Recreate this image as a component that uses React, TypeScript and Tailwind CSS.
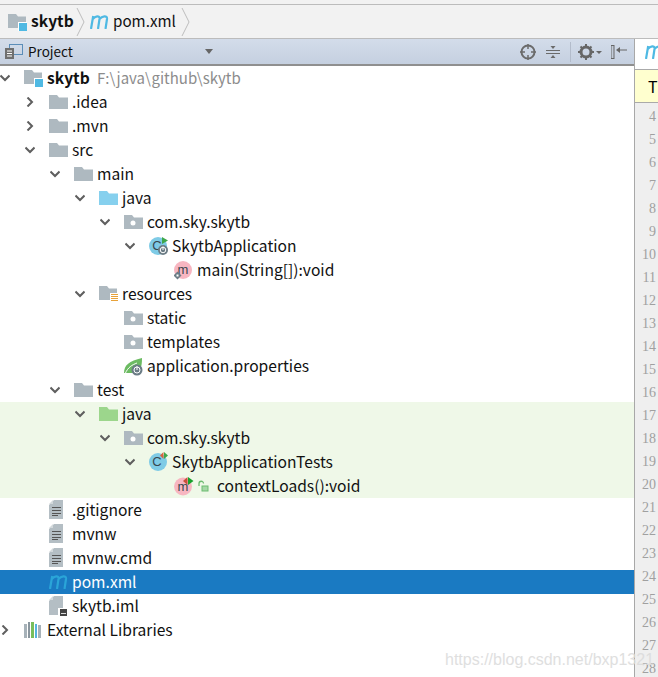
import React from "react";

const F = "#AEB9C0";

function Folder({ color = F, children }: { color?: string; children?: React.ReactNode }) {
  return (
    <svg width="19" height="16" viewBox="0 0 19 16" className="block">
      <path d="M0 1h8l2 2.500h9V15H0z" fill={color} />
      {children}
    </svg>
  );
}
const ModuleFolder = () => (
  <svg width="20" height="18" viewBox="0 0 20 18" className="block">
    <path d="M0 1h8l2 2.500h8V15H0z" fill={F} />
    <rect x="10" y="9" width="9" height="9" fill="#fff" />
    <rect x="11" y="10" width="8" height="8" fill="#4FB9E3" />
  </svg>
);
const PackageFolder = () => (
  <Folder>
    <circle cx="9" cy="9" r="2.500" fill="#fff" />
  </Folder>
);
const ResFolder = () => (
  <svg width="20" height="18" viewBox="0 0 20 18" className="block">
    <path d="M0 1h8l2 2.500h8V15H0z" fill={F} />
    <rect x="11" y="8" width="9" height="10" fill="#fff" />
    <path d="M12 9.500h7M12 11.500h7M12 13.500h7M12 15.500h7" stroke="#E8A23A" strokeWidth="1" />
  </svg>
);
const Gear = ({ x, y, r = 5 }: { x: number; y: number; r?: number }) => (
  <g>
    <circle cx={x} cy={y} r={r} fill="#6B7C85" />
    <circle cx={x} cy={y} r={r * 0.55} fill="none" stroke="#fff" strokeWidth="1" />
    <path d={`M${x} ${y - r * 0.7}v${r * 0.7}`} stroke="#fff" strokeWidth="1" />
  </g>
);
const ClassText = ({ x, y }: { x: number; y: number }) => (
  <text x={x} y={y} textAnchor="middle" fontSize="13" fill="#37474F" fontFamily="Liberation Sans, sans-serif">
    C
  </text>
);
const SpringClass = () => (
  <svg width="22" height="20" viewBox="0 0 22 20" className="block">
    <circle cx="9" cy="10" r="9" fill="#7FCBE6" />
    <ClassText x={8} y={14} />
    <path d="M13 1v7l6-3.500z" fill="#3FA74A" />
    <Gear x={14} y={14} r={5} />
  </svg>
);
const TestClass = () => (
  <svg width="22" height="20" viewBox="0 0 22 20" className="block">
    <circle cx="9" cy="10" r="9" fill="#7FCBE6" />
    <ClassText x={8} y={14} />
    <path d="M14.500 0L11 3.500l3.500 3.500z" fill="#D9623F" />
    <path d="M15 0v7l4-3.500z" fill="#3FA74A" />
  </svg>
);
const MethodMain = () => (
  <svg width="22" height="20" viewBox="0 0 22 20" className="block">
    <circle cx="9" cy="10" r="9" fill="#F7B6C1" />
    <text x="9" y="14" textAnchor="middle" fontSize="13" fill="#37474F" fontFamily="Liberation Sans, sans-serif">m</text>
    <path d="M3.500 11.500l4 4-4 4-4-4z" fill="#6B7C85" />
    <rect x="2.500" y="14.500" width="2" height="2" fill="#fff" />
  </svg>
);
const MethodTest = () => (
  <svg width="40" height="20" viewBox="0 0 40 20" className="block">
    <circle cx="9" cy="10.500" r="9" fill="#F7B6C1" />
    <text x="9" y="15" textAnchor="middle" fontSize="13" fill="#37474F" fontFamily="Liberation Sans, sans-serif">m</text>
    <path d="M13.500 1L9 5l4.500 4z" fill="#C9503A" />
    <path d="M14 1v8l5.500-4z" fill="#17A02C" />
    <rect x="28" y="10" width="6" height="5" fill="#A5D8A6" stroke="#6DBB70" strokeWidth="1" />
    <path d="M25 10V7.500a2.200 2.200 0 0 1 4.500 0" fill="none" stroke="#6DBB70" strokeWidth="1.300" />
  </svg>
);
const Leaf = () => (
  <svg width="20" height="20" viewBox="0 0 20 20" className="block">
    <path d="M0 17C0 9 5 5 18 2c0 7-1 12-5 15H3z" fill="#6CBB62" />
    <path d="M1 18C4 11 8 9 13 7" fill="none" stroke="#fff" strokeWidth="1" />
    <Gear x={13} y={14} r={5.500} />
  </svg>
);
const TextFile = ({ badge }: { badge?: boolean }) => (
  <svg width="18" height="20" viewBox="0 0 18 20" className="block">
    <path d="M5 0h9v19H0V5z" fill="#B4BEC4" />
    <path d="M0 4l4-4v4z" fill="#D3D9DC" />
    {!badge && <path d="M3 7.500h9M3 10.500h9M3 13.500h9M3 15.500h6" stroke="#555" strokeWidth="1" />}
    {badge && (
      <>
        <rect x="9" y="12" width="9" height="8" fill="#fff" />
        <rect x="11" y="13" width="7" height="7" fill="#444" />
        <rect x="12" y="17" width="5" height="1" fill="#ddd" />
      </>
    )}
  </svg>
);
const MavenM = ({ color = "#4FB9E3" }: { color?: string }) => (
  <svg width="19" height="14" viewBox="0 0 19 14" className="block">
    <path
      d="M1 14L3.200 1M2.800 4C5 1 10 0 9.500 4L8 14M9.500 4C12 1 17.500 0 17 4L15.500 14"
      fill="none"
      stroke={color}
      strokeWidth="2.200"
    />
  </svg>
);
const Libraries = () => (
  <svg width="18" height="18" viewBox="0 0 18 18" className="block">
    <rect x="0" y="3" width="3" height="14" fill="#A7B2B9" />
    <rect x="4" y="1" width="2" height="16" fill="#8A969E" />
    <rect x="7" y="1" width="3" height="16" fill="#78BE5C" />
    <rect x="11" y="3" width="2" height="14" fill="#56B4DD" />
    <rect x="14" y="4" width="3" height="13" fill="#A7B2B9" />
  </svg>
);
const Chevron = ({ open }: { open: boolean }) => (
  <svg width="10" height="10" viewBox="0 0 10 10" className="block">
    <path d={open ? "M0.500 2.500l4.500 4.500 4.500-4.500" : "M2.500 0.500l4.500 4.500-4.500 4.500"} fill="none" stroke="#5f5f5f" strokeWidth="2" />
  </svg>
);

type Row = {
  depth: number;
  label: string;
  icon: React.ReactNode;
  arrow?: "open" | "closed";
  green?: boolean;
  selected?: boolean;
  bold?: boolean;
  path?: string;
  iconW?: number;
};

const rows: Row[] = [
  { depth: 0, label: "skytb", icon: <ModuleFolder />, arrow: "open", bold: true, path: "F:\\java\\github\\skytb" },
  { depth: 1, label: ".idea", icon: <Folder />, arrow: "closed" },
  { depth: 1, label: ".mvn", icon: <Folder />, arrow: "closed" },
  { depth: 1, label: "src", icon: <Folder />, arrow: "open" },
  { depth: 2, label: "main", icon: <Folder />, arrow: "open" },
  { depth: 3, label: "java", icon: <Folder color="#86D0EE" />, arrow: "open" },
  { depth: 4, label: "com.sky.skytb", icon: <PackageFolder />, arrow: "open" },
  { depth: 5, label: "SkytbApplication", icon: <SpringClass />, arrow: "open" },
  { depth: 6, label: "main(String[]):void", icon: <MethodMain /> },
  { depth: 3, label: "resources", icon: <ResFolder />, arrow: "open" },
  { depth: 4, label: "static", icon: <PackageFolder /> },
  { depth: 4, label: "templates", icon: <PackageFolder /> },
  { depth: 4, label: "application.properties", icon: <Leaf /> },
  { depth: 2, label: "test", icon: <Folder />, arrow: "open" },
  { depth: 3, label: "java", icon: <Folder color="#9CD68C" />, arrow: "open", green: true },
  { depth: 4, label: "com.sky.skytb", icon: <PackageFolder />, arrow: "open", green: true },
  { depth: 5, label: "SkytbApplicationTests", icon: <TestClass />, arrow: "open", green: true },
  { depth: 6, label: "contextLoads():void", icon: <MethodTest />, green: true, iconW: 43 },
  { depth: 1, label: ".gitignore", icon: <TextFile /> },
  { depth: 1, label: "mvnw", icon: <TextFile /> },
  { depth: 1, label: "mvnw.cmd", icon: <TextFile /> },
  { depth: 1, label: "pom.xml", icon: <MavenM color="#2AA5D8" />, selected: true },
  { depth: 1, label: "skytb.iml", icon: <TextFile badge /> },
  { depth: 0, label: "External Libraries", icon: <Libraries />, arrow: "closed" },
];

const lines = Array.from({ length: 25 }, (_, i) => i + 4);

const Sep = () => (
  <svg width="9" height="28" viewBox="0 0 9 28" className="block">
    <path d="M1 0l7 14-7 14" fill="none" stroke="#bdbdbd" strokeWidth="1" />
  </svg>
);

export default function App() {
  return (
    <div className="relative h-[677px] w-[658px] overflow-hidden bg-white font-['Noto_Sans_CJK_SC',sans-serif] text-[15.6px] text-[#111]">
      <div className="h-[4px] bg-[#f2f2f2]" />
      <div className="flex h-[35px] items-center border-y border-[#bcbcbc] bg-[#f2f2f2] pl-2">
        <ModuleFolder />
        <span className="ml-[3px] w-[40px] pb-[2px] font-bold">skytb</span>
        <span className="ml-[5px]"><Sep /></span>
        <span className="ml-[5px] w-[23px]"><MavenM /></span>
        <span className="pb-[2px] text-[15.2px]">pom.xml</span>
        <span className="ml-[5px]"><Sep /></span>
      </div>
      <div className="flex h-[638px]">
        <div className="w-[634px] shrink-0">
          <div className="flex h-[27px] items-center border-b-2 border-[#8f8f8f] bg-gradient-to-b from-[#d3dcea] to-[#c5d0e0] pl-[5px] text-[13.500px]">
            <svg width="18" height="16" viewBox="0 0 18 16" className="block">
              <rect x="4.500" y="0.500" width="13" height="10" fill="none" stroke="#5B8DB8" />
              <rect x="0" y="4" width="9" height="11" fill="#6F6F6F" />
              <path d="M2 7h5M2 9.500h5M2 12h5" stroke="#fff" />
            </svg>
            <span className="ml-[5px] w-[45px]">Project</span>
            <svg width="10" height="6" viewBox="0 0 10 6" className="ml-[131px] block">
              <path d="M1 0h8L5 5z" fill="#666" />
            </svg>
            <div className="ml-auto flex items-center">
              <svg width="16" height="16" viewBox="0 0 16 16" className="block">
                <circle cx="8" cy="8" r="6.500" fill="none" stroke="#6b6b6b" strokeWidth="2" />
                <path d="M8 0v5M8 11v5M0 8h5M11 8h5" stroke="#6b6b6b" strokeWidth="1.500" />
              </svg>
              <svg width="14" height="14" viewBox="0 0 14 14" className="ml-[10px] block">
                <path d="M0 5.500h14M0 8.500h14" stroke="#6b6b6b" />
                <path d="M7 4L4.500 1h5zM7 10l-2.500 3h5z" fill="#6b6b6b" />
              </svg>
              <span className="ml-[10px] h-[20px] w-px bg-[#b3bccb]" />
              <svg width="24" height="16" viewBox="0 0 24 16" className="ml-[7px] block">
                <circle cx="8" cy="8" r="5" fill="none" stroke="#666" strokeWidth="3" />
                <path d="M8 0v16M0 8h16M2.500 2.500l11 11M13.500 2.500l-11 11" stroke="#666" strokeWidth="2" strokeDasharray="3 10" />
                <path d="M18 7h6l-3 3z" fill="#666" />
              </svg>
              <svg width="16" height="14" viewBox="0 0 16 14" className="ml-[9px] mr-[7px] block">
                <rect x="0" y="0.500" width="3" height="13" fill="#c3ccd9" stroke="#666" />
                <path d="M16 5H7" stroke="#666" />
                <path d="M5 5l4-3v6z" fill="#666" />
              </svg>
            </div>
          </div>
          <div>
            {rows.map((r, i) => (
              <div
                key={i}
                className={`flex h-[24px] items-center ${r.selected ? "bg-[#1a7ac2] text-white" : r.green ? "bg-[#eff8e8]" : ""}`}
                style={{ paddingLeft: r.depth * 25 }}
              >
                <span className="w-[10px] shrink-0">
                  {r.arrow && <Chevron open={r.arrow === "open"} />}
                </span>
                <span className="ml-[14px] flex shrink-0 items-center" style={{ width: r.iconW ?? 23 }}>
                  {r.icon}
                </span>
                <span className={r.bold ? "w-[41px] font-bold" : ""}>{r.label}</span>
                {r.path && <span className="ml-[9px] text-[15px] text-[#8c8c8c]">{r.path}</span>}
              </div>
            ))}
          </div>
        </div>
        <div className="min-w-0 flex-1 border-l border-[#a8a8a8] bg-[#efefef]">
          <div className="h-[31px] border-b border-[#aaa] bg-white pl-[10px] pt-[6px]">
            <MavenM />
          </div>
          <div className="flex h-[33px] items-center border-b border-[#aaa] bg-[#ffffcf] pl-[13px] text-[16px] text-black">T</div>
          <div className="pt-[2px] font-['Liberation_Serif',serif] text-[14px] text-[#a0a0a0]">
            {lines.map((n) => (
              <div key={n} className="flex h-[23px] items-center justify-end pr-[2px]">
                {n}
              </div>
            ))}
          </div>
        </div>
      </div>
      <div className="absolute left-[445px] top-[648px] font-['Liberation_Sans',sans-serif] text-[16px] text-[#dcdcdc] opacity-90">
        https://blog.csdn.net/bxp1321
      </div>
    </div>
  );
}
